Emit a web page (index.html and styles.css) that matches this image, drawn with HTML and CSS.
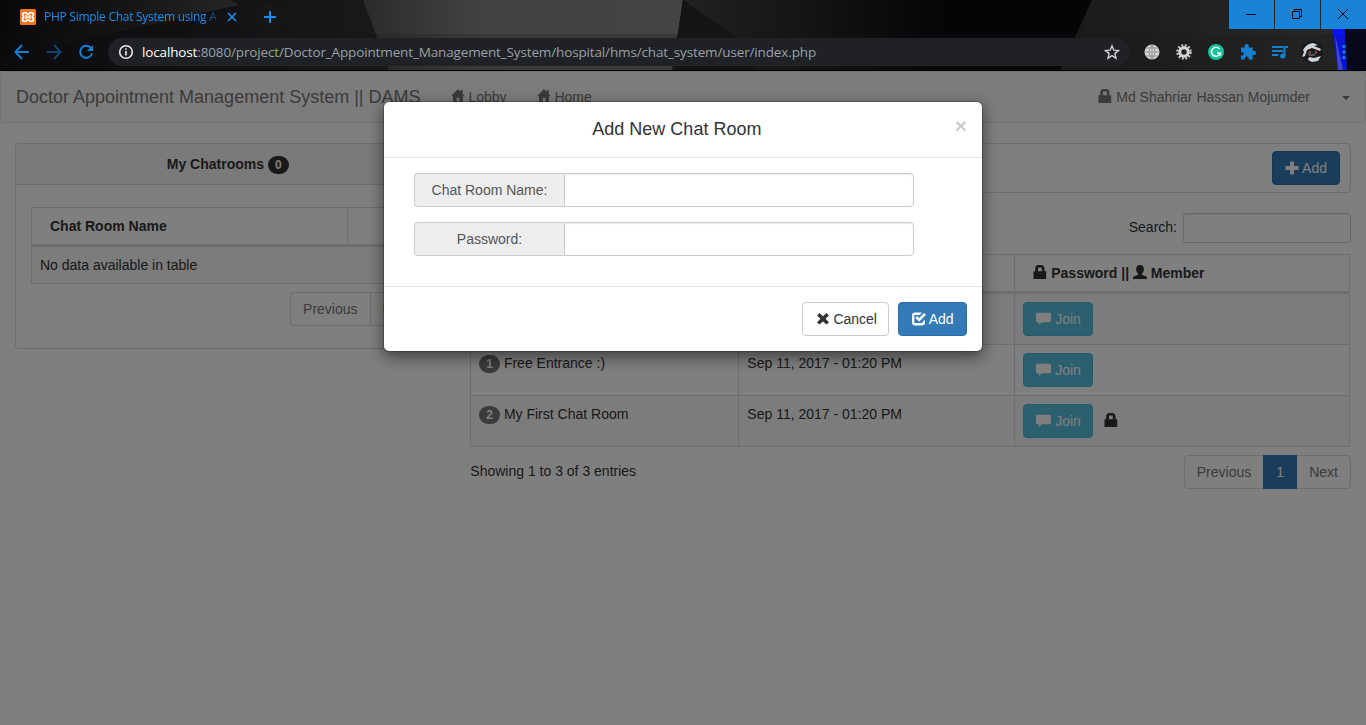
FILE: index.html
```html
<!DOCTYPE html>
<html lang="en">
<head>
<meta charset="utf-8">
<title>PHP Simple Chat System using AJAX</title>
<link rel="stylesheet" href="styles.css">
</head>
<body>
<svg width="0" height="0" class="defs">
  <symbol id="home" viewBox="0 0 14 14"><path d="M7 0L0 7.300h2V13.500h3.700V8.800h2.700v4.700H12V7.300h2L11.700 4.900V1H9.600v1.800z"/></symbol>
  <symbol id="lock" viewBox="0 0 14 14"><path fill-rule="evenodd" d="M.5 6.200h1.700V3.500C2.200 1.300 3.500 0 5.500 0h2.700c2 0 3.300 1.300 3.300 3.500v2.700h1.700V14H.5zM5 6.200h3.800V3.600c0-.8-.4-1.200-1.100-1.200H6.100c-.7 0-1.100.4-1.100 1.200z"/></symbol>
  <symbol id="user" viewBox="0 0 14 14"><path d="M7 0c2.500 0 3.900 1.500 3.900 4.200 0 1.800-.8 3.300-1.900 4.300v1.200l3.900 1.600c.8.400 1.100.9 1.100 1.600V14H0v-1.100c0-.7.300-1.200 1.100-1.600L5 9.700V8.500c-1.100-1-1.900-2.500-1.900-4.300C3.100 1.500 4.500 0 7 0z"/></symbol>
  <symbol id="comment" viewBox="0 0 15 14"><path d="M1 .7h13l1 1v7.600l-1 1H5.600L2.800 13.300V10.300H1l-1-1V1.700z"/></symbol>
  <symbol id="plus" viewBox="0 0 14 14"><path d="M5 .5h4v4.500h4.500v4H9v4.500H5V9H.5V5H5z"/></symbol>
  <symbol id="remove" viewBox="0 0 14 14"><path d="M3.500 1L7 4.200 10.500 1 13 3.400 9.500 6.800 13 10.200 10.500 12.600 7 9.500 3.500 12.600 1 10.200 4.500 6.800 1 3.400z"/></symbol>
  <symbol id="check" viewBox="0 0 14 14"><path d="M10 .5H3C1.200.5 0 1.600 0 3.400v7.200c0 1.800 1.200 2.900 3 2.900h7c1.800 0 3-1.100 3-2.900V7.600l-2.400 2.400v1.100H2.400V2.900h5.400zM12.100.9L14 2.800 7.200 9.700 3.300 5.900l1.900-1.800 2 1.900z"/></symbol>
</svg>

<header class="chrome">
  <svg class="wallpaper" viewBox="0 0 1366 70" preserveAspectRatio="none">
    <defs>
      <linearGradient id="w1"><stop offset="0" stop-color="#08080a"/><stop offset=".5" stop-color="#141415"/><stop offset="1" stop-color="#262626"/></linearGradient>
      <linearGradient id="w2"><stop offset="0" stop-color="#2b2b2b"/><stop offset=".35" stop-color="#414141"/><stop offset="1" stop-color="#444"/></linearGradient>
      <linearGradient id="w3"><stop offset="0" stop-color="#222"/><stop offset=".5" stop-color="#141414"/><stop offset="1" stop-color="#050407"/></linearGradient>
      <linearGradient id="w4"><stop offset="0" stop-color="#1a1a1b"/><stop offset="1" stop-color="#292929"/></linearGradient>
      <linearGradient id="w5"><stop offset="0" stop-color="#09080b"/><stop offset="1" stop-color="#19191a"/></linearGradient>
    </defs>
    <rect width="1366" height="70" fill="#0a090c"/>
    <path d="M0 0H235L240 5 105 35 0 56z" fill="url(#w1)"/>
    <path d="M230 0H363L389 70H0V56L105 35 240 5z" fill="url(#w5)"/>
    <path d="M363 0H683L673 70H389z" fill="url(#w2)"/>
    <path d="M683 0H940V70H673z" fill="url(#w3)"/>
    <path d="M683 0L732 34 758 70H672z" fill="#141414"/>
    <path d="M938 0H1092L1060 70H938z" fill="#050407"/>
    <path d="M1092 0H1366V70H1060z" fill="url(#w4)"/>
    <path d="M1340 0H1366V70H1345z" fill="#06061d"/>
    <path d="M1328 0H1343L1347 70H1338z" fill="#0713ff"/>
    <path d="M1335 34L1343 70H1338z" fill="#4a52f5"/>
  </svg>
  <div class="tabs">
    <div class="tab">
      <svg class="favicon" viewBox="0 0 16 16"><rect width="16" height="16" rx="1.500" fill="#f37623"/><path d="M4.500 3.800h1.700L8 5.700l1.800-1.900h1.700a2 2 0 012 2L12.200 8l1.300 2.200a2 2 0 01-2 2H9.800L8 10.300l-1.800 1.900H4.500a2 2 0 01-2-2L3.800 8 2.500 5.800a2 2 0 012-2zM5.300 6.200L7 8 5.300 9.800M10.700 6.200L9 8l1.700 1.800" fill="none" stroke="#fff" stroke-width="1.600"/></svg>
      <span class="tab-title">PHP Simple Chat System using A</span>
      <svg class="tab-close" viewBox="0 0 10 10"><path d="M1 1l8 8M9 1L1 9"/></svg>
    </div>
    <div class="new-tab"><svg viewBox="0 0 12 12"><path d="M6 0v12M0 6h12"/></svg></div>
    <div class="win">
      <span><svg viewBox="0 0 12 12"><path d="M1 6.500h10"/></svg></span>
      <span><svg viewBox="0 0 12 12"><path d="M1.500 3.500h7v7h-7zM3.500 3.500v-2h7v7h-2"/></svg></span>
      <span><svg viewBox="0 0 12 12"><path d="M1 1l10 10M11 1L1 11"/></svg></span>
    </div>
  </div>
  <div class="toolbar">
    <svg class="nav-ic" viewBox="0 0 16 16"><path d="M15 8H2M8 1L1.500 8 8 15"/></svg>
    <svg class="nav-ic dim" viewBox="0 0 16 16"><path d="M1 8h13M8 1l6.500 7L8 15"/></svg>
    <svg class="nav-ic" viewBox="0 0 16 16"><path d="M13 4.200A6 6 0 1014 9.500"/><path d="M15 1v6H9z" fill="#157fd0" stroke="none"/></svg>
    <div class="omnibox">
      <svg class="info" viewBox="0 0 16 16"><circle cx="8" cy="8" r="6.300"/><path d="M8 7v4.500M8 4.200v1.600"/></svg>
      <span class="url"><b>localhost</b>:8080/project/Doctor_Appointment_Management_System/hospital/hms/chat_system/user/index.php</span>
      <svg class="star" viewBox="0 0 16 16"><path d="M8 1.800l1.800 4.400 4.700.4-3.600 3 1.100 4.600L8 11.700l-4 2.500 1.100-4.600-3.600-3 4.700-.4z"/></svg>
    </div>
    <div class="ext">
      <svg viewBox="0 0 22 22"><circle cx="11" cy="11" r="7.500" fill="#d2d2d2"/><path d="M3.500 11h15M11 3.500v15M5 7h12M5 15h12M11 3.500q-6 7.500 0 15M11 3.500q6 7.500 0 15" fill="none" stroke="#888" stroke-width=".8"/></svg>
      <svg viewBox="0 0 22 22"><circle cx="11" cy="11" r="6.500" fill="none" stroke="#c8c8c8" stroke-width="2.500" stroke-dasharray="1.900 1.500"/><circle cx="11" cy="11" r="4.200" fill="none" stroke="#d5d5d5" stroke-width="3"/></svg>
      <svg viewBox="0 0 22 22"><circle cx="11" cy="11" r="8" fill="#15c39a"/><path d="M14.500 8A4.500 4.500 0 1015.300 12H12M15.500 11.500v3" fill="none" stroke="#fff" stroke-width="1.500"/></svg>
      <svg viewBox="0 0 22 22"><path d="M4 6.500h4c-1-2 0-3.500 1.700-3.500s2.600 1.500 1.800 3.500h4.200V10c2-.8 3.300.2 3.300 1.900s-1.300 2.600-3.300 1.900v4.700h-4c.5-2-.4-3-1.900-3s-2.400 1-1.900 3H4v-4c1.700.3 2.600-.4 2.600-1.700S5.700 10.700 4 11z" fill="#157fd0"/></svg>
      <svg viewBox="0 0 22 22"><path d="M3 6h11M3 10h11M3 14h6.500M15.500 15V6H19" fill="none" stroke="#157fd0" stroke-width="2"/><circle cx="13.700" cy="15" r="2.600" fill="#157fd0"/></svg>
      <svg viewBox="0 0 22 22"><circle cx="11" cy="11" r="11" fill="#181a1d"/><path d="M2 9Q5 3 12 2L17 4 13 5 20 8 19 10 11 7 6 9 4 15 1 16 3 11zM8 16l5 1 7-2-3 5-6 1-4-2z" fill="#d0d4d6"/><path d="M6 11l4 2 6-1-3 3-5 0z" fill="#50575a"/><path d="M8 10.500l2 1M14 11.500l2-1" stroke="#d43a30" stroke-width="1.500"/></svg>
      <svg viewBox="0 0 22 22"><circle cx="11" cy="5.500" r="1.700" fill="#157fd0"/><circle cx="11" cy="11" r="1.700" fill="#157fd0"/><circle cx="11" cy="16.500" r="1.700" fill="#157fd0"/></svg>
    </div>
  </div>
</header>

<main class="page">
  <nav class="navbar">
    <span class="brand">Doctor Appointment Management System || DAMS</span>
    <a class="nav-link"><svg class="gi"><use href="#home"/></svg> Lobby</a>
    <a class="nav-link"><svg class="gi"><use href="#home"/></svg> Home</a>
    <span class="nav-right"><a class="nav-link"><svg class="gi"><use href="#lock"/></svg> Md Shahriar Hassan Mojumder</a><a class="nav-link"><i class="caret"></i></a></span>
  </nav>
  <div class="row">
    <section class="col-left">
      <div class="panel">
        <div class="panel-heading">My Chatrooms <span class="badge dark">0</span></div>
        <div class="panel-body">
          <table class="table left-table">
            <thead><tr><th class="c-name">Chat Room Name</th><th></th></tr></thead>
            <tbody><tr class="odd"><td colspan="2">No data available in table</td></tr></tbody>
          </table>
          <div class="pager"><a>Previous</a><a>Next</a></div>
        </div>
      </div>
    </section>
    <section class="col-right">
      <div class="panel bar"><a class="btn primary"><svg class="gi"><use href="#plus"/></svg> Add</a></div>
      <div class="search"><label>Search:</label><span class="search-input"></span></div>
      <table class="table rooms">
        <colgroup><col class="k1"><col class="k2"><col></colgroup>
        <thead><tr><th>Chat Room Name</th><th>Date Created</th><th><svg class="gi"><use href="#lock"/></svg> Password || <svg class="gi"><use href="#user"/></svg> Member</th></tr></thead>
        <tbody>
          <tr class="odd"><td></td><td></td><td><a class="btn info-btn"><svg class="gi wide"><use href="#comment"/></svg> Join</a></td></tr>
          <tr><td><span class="badge">1</span> Free Entrance :)</td><td>Sep 11, 2017 - 01:20 PM</td><td><a class="btn info-btn"><svg class="gi wide"><use href="#comment"/></svg> Join</a></td></tr>
          <tr class="odd"><td><span class="badge">2</span> My First Chat Room</td><td>Sep 11, 2017 - 01:20 PM</td><td><a class="btn info-btn"><svg class="gi wide"><use href="#comment"/></svg> Join</a><svg class="gi row-lock"><use href="#lock"/></svg></td></tr>
        </tbody>
      </table>
      <div class="table-foot"><span class="showing">Showing 1 to 3 of 3 entries</span><div class="pager"><a>Previous</a><a class="active">1</a><a>Next</a></div></div>
    </section>
  </div>

  <div class="backdrop">
    <div class="modal">
      <div class="modal-header"><h4>Add New Chat Room</h4><span class="close">×</span></div>
      <div class="modal-body">
        <div class="group"><label>Chat Room Name:</label><input type="text"></div>
        <div class="group"><label>Password:</label><input type="password"></div>
      </div>
      <div class="modal-footer">
        <a class="btn default"><svg class="gi"><use href="#remove"/></svg> Cancel</a>
        <a class="btn primary submit"><svg class="gi"><use href="#check"/></svg> Add</a>
      </div>
    </div>
  </div>
</main>
</body>
</html>
```
FILE: styles.css
```css
* { box-sizing: border-box; }
body { margin: 0; height: 725px; overflow: hidden; display: flex; flex-direction: column; background: #fff; color: #333; font: 14px/20px "Liberation Sans", Arial, sans-serif; }
.defs { position: absolute; }

/* Browser chrome */
.chrome { position: relative; height: 71px; flex: none; background: #000; border-bottom: 1px solid #000; }
.wallpaper { position: absolute; left: 0; top: 0; width: 1366px; height: 70px; }
.tabs, .toolbar { position: relative; display: flex; align-items: center; }
.tabs { height: 34px; }
.tab { display: flex; align-items: center; width: 256px; padding-left: 20px; }
.favicon { width: 16px; height: 16px; }
.tab-title { width: 176px; margin-left: 8px; white-space: nowrap; color: #1a8cf0; font: 12px/18px "Open Sans", sans-serif; letter-spacing: -.27px; -webkit-mask-image: linear-gradient(90deg, #000 160px, transparent 178px); mask-image: linear-gradient(90deg, #000 160px, transparent 178px); }
.tab-close { width: 10px; height: 10px; margin-left: 7px; fill: none; stroke: #1a8cf0; stroke-width: 1.7; }
.new-tab { width: 28px; height: 28px; border-radius: 50%; background: #151618; display: flex; align-items: center; justify-content: center; }
.new-tab svg { width: 12px; height: 12px; stroke: #1a8cf0; stroke-width: 2; }
.win { display: flex; gap: 1px; margin-left: auto; align-self: flex-start; }
.win span { width: 45px; height: 29px; padding-right: 2px; background: #1883d7; display: flex; align-items: center; justify-content: center; }
.win svg { width: 12px; height: 12px; margin-top: -1px; fill: none; stroke: #050608; stroke-width: 1; }
.toolbar { height: 36px; padding-left: 14px; background: rgba(20, 20, 20, .18); }
.nav-ic { width: 16px; height: 16px; margin-right: 16px; fill: none; stroke: #157fd0; stroke-width: 2; }
.nav-ic.dim { opacity: .5; }
.omnibox { width: 1022px; height: 28px; margin-left: -2px; padding: 0 10px; border-radius: 14px; background: #202124; display: flex; align-items: center; }
.info { width: 16px; height: 16px; fill: none; stroke: #e8eaed; stroke-width: 1.6; }
.url { margin-left: 8px; color: #9aa0a6; white-space: nowrap; font: 13.5px/20px "Open Sans", sans-serif; letter-spacing: -.14px; }
.url b { font-weight: 400; color: #fff; }
.star { width: 16px; height: 16px; margin-left: auto; fill: none; stroke: #d0d2d5; stroke-width: 1.4; }
.ext { display: flex; gap: 10px; margin-left: 11px; }
.ext svg { width: 22px; height: 22px; }

/* Page */
.page { position: relative; flex: 1; background: #fff; }
.navbar { height: 52px; margin-bottom: 20px; border: 1px solid #e7e7e7; border-radius: 4px; background: #f8f8f8; color: #777; display: flex; }
.brand { padding: 15px; font-size: 18px; white-space: nowrap; }
.nav-link { padding: 15px; white-space: nowrap; }
.nav-right { display: flex; margin-left: auto; }
.nav-right .nav-link:first-child { margin-right: 2px; }
.gi { display: inline-block; width: 14px; height: 14px; fill: currentColor; position: relative; top: 1px; vertical-align: baseline; }
.gi.wide { width: 15px; }
.btn .gi { top: 2px; }
.caret { display: inline-block; border: 4px solid transparent; border-top-color: #777; border-bottom: 0; vertical-align: middle; }
.row { display: grid; grid-template-columns: 455.33px 1fr; align-items: start; }
.col-left, .col-right { padding: 0 15px; }
.panel { border: 1px solid #ddd; border-radius: 4px; background: #fff; }
.panel-heading { padding: 10px 15px; border-bottom: 1px solid #ddd; background: #f5f5f5; text-align: center; font-weight: 700; height: 41px; }
.panel-body { padding: 22px 15px; height: 163px; }
.badge { display: inline-block; min-width: 10px; padding: 3px 7px; border-radius: 10px; background: #777; color: #fff; font-size: 12px; font-weight: 700; line-height: 12px; text-align: center; vertical-align: middle; }
.badge.dark { background: #333; }
.table { width: 100%; border: 1px solid #ddd; border-collapse: separate; border-spacing: 0; table-layout: fixed; }
.table th { height: 38px; padding: 8px 8px 8px 18px; border-right: 1px solid #ddd; border-bottom: 2px solid #ddd; text-align: left; }
.table td { padding: 8px; border-top: 1px solid #ddd; border-right: 1px solid #ddd; vertical-align: top; }
.table th:last-child, .table td:last-child { border-right: 0; }
.odd td { background: #f9f9f9; }
.c-name { width: 316px; }
.pager { display: flex; justify-content: flex-end; margin-top: 8px; }
.pager a { height: 34px; padding: 6px 12px; margin-left: -1px; border: 1px solid #ddd; color: #777; }
.pager a:first-child { border-radius: 4px 0 0 4px; }
.pager a:last-child { border-radius: 0 4px 4px 0; }
.pager a.active { position: relative; z-index: 1; width: 34px; background: #337ab7; border-color: #337ab7; color: #fff; }
.bar { height: 50px; padding: 7px 10px; display: flex; justify-content: flex-end; }
.btn { display: inline-block; height: 34px; padding: 6px 12px; border: 1px solid #ccc; border-radius: 4px; white-space: nowrap; }
.btn.primary { background: #337ab7; border-color: #2e6da4; color: #fff; }
.btn.default { width: 87px; padding-left: 12.5px; background: #fff; color: #333; }
.btn.submit { width: 69px; padding-left: 12.6px; }
.info-btn { display: block; float: left; width: 70px; background: #5bc0de; border-color: #46b8da; color: #fff; }
.row-lock { margin: 8px 0 0 11px; }
.search { display: flex; justify-content: flex-end; height: 30px; margin-top: 20px; gap: 6px; }
.search label { padding-top: 4px; }
.search-input { width: 168px; height: 30px; border: 1px solid #ccc; border-radius: 3px; box-shadow: inset 0 1px 1px rgba(0, 0, 0, .075); }
.rooms { width: 880px; margin-top: 11px; }
.k1 { width: 268px; }
.k2 { width: 276px; }
.table-foot { display: flex; justify-content: space-between; }
.showing { padding-top: 14px; }

/* Modal */
.backdrop { position: absolute; inset: 0; z-index: 10; background: rgba(0, 0, 0, .5); }
.modal { width: 600px; margin: 30px auto; border: 1px solid rgba(0, 0, 0, .2); border-radius: 6px; background: #fff; background-clip: padding-box; box-shadow: 0 5px 15px rgba(0, 0, 0, .5); }
.modal-header { height: 56px; padding: 15px; border-bottom: 1px solid #e5e5e5; display: flex; }
.modal-header h4 { flex: 1; margin: 0; text-align: center; font-size: 18px; line-height: 25px; font-weight: 500; }
.close { font-size: 21px; font-weight: 700; line-height: 21px; margin-top: -2px; color: #000; opacity: .2; text-shadow: 0 1px 0 #fff; }
.modal-body { height: 128px; padding: 15px 30px; display: flex; flex-direction: column; gap: 15px; }
.group { display: flex; width: 500px; height: 34px; }
.group label { width: 150px; padding: 6px 12px; border: 1px solid #ccc; border-right: 0; border-radius: 4px 0 0 4px; background: #eee; color: #555; text-align: center; }
.group input { width: 350px; border: 1px solid #ccc; border-radius: 0 4px 4px 0; box-shadow: inset 0 1px 1px rgba(0, 0, 0, .075); background: #fff; }
.modal-footer { height: 65px; padding: 15px; border-top: 1px solid #e5e5e5; display: flex; justify-content: flex-end; gap: 9px; }
```
